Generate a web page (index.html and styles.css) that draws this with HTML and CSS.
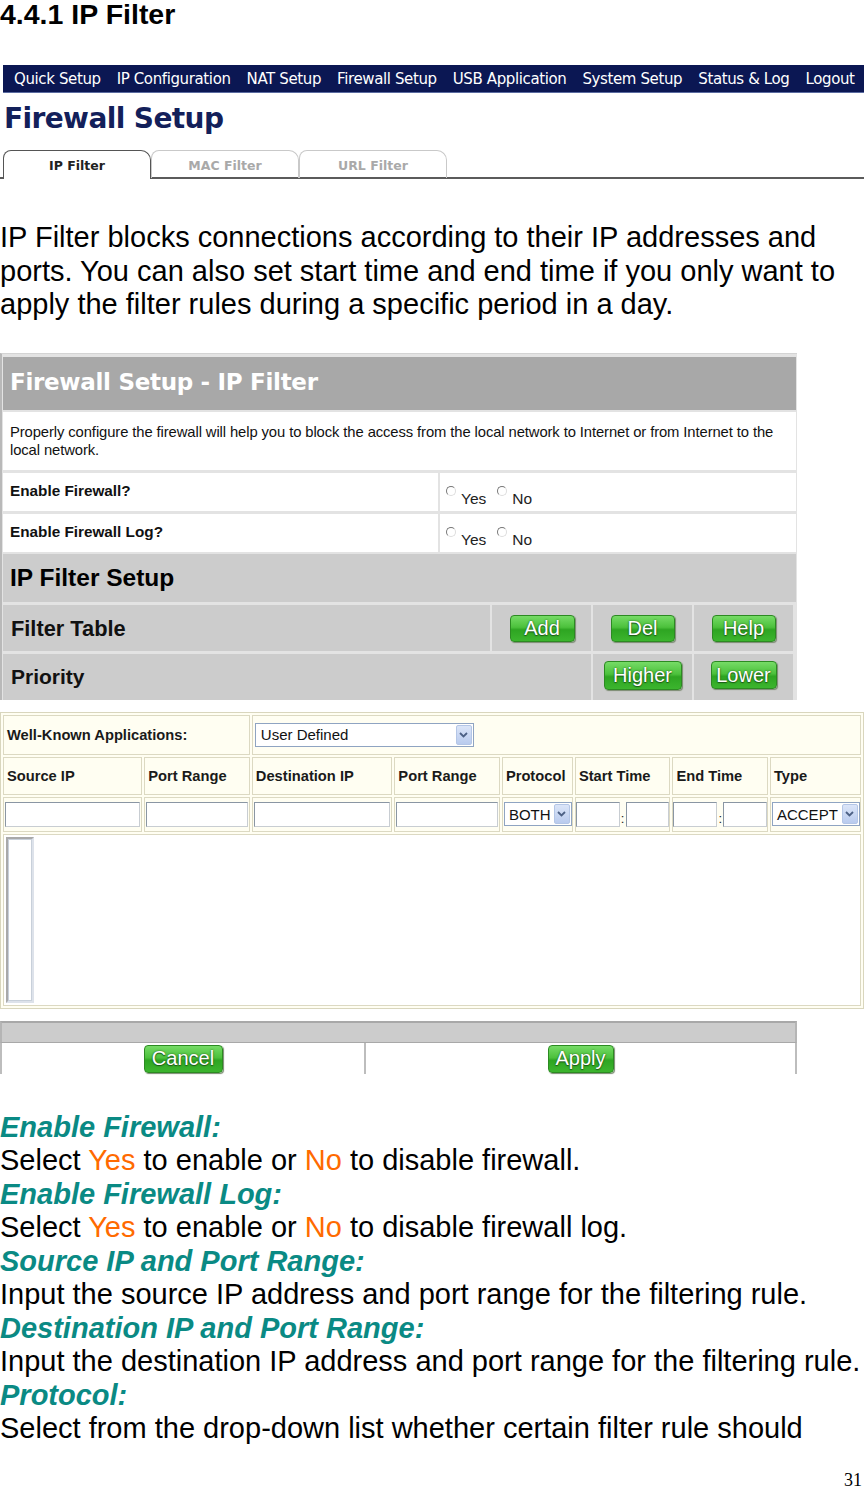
FILE: index.html
```html
<!DOCTYPE html>
<html>
<head>
<meta charset="utf-8">
<link rel="stylesheet" href="styles.css">
</head>
<body>
<h1 class="title">4.4.1 IP Filter</h1>

<div class="shot1">
  <nav class="nav">
    <span>Quick Setup</span><span>IP Configuration</span><span>NAT Setup</span><span>Firewall Setup</span><span>USB Application</span><span>System Setup</span><span>Status &amp; Log</span><span>Logout</span>
  </nav>
  <div class="fw-title">Firewall Setup</div>
  <div class="tabs">
    <div class="tab active">IP Filter</div>
    <div class="tab">MAC Filter</div>
    <div class="tab">URL Filter</div>
  </div>
</div>

<p class="intro">IP Filter blocks connections according to their IP addresses and<br>ports. You can also set start time and end time if you only want to<br>apply the filter rules during a specific period in a day.</p>

<div class="shot2">
  <div class="panel">
    <div class="p-head">Firewall Setup - IP Filter</div>
    <div class="p-desc">Properly configure the firewall will help you to block the access from the local network to Internet or from Internet to the<br>local network.</div>
    <div class="p-row">
      <div class="p-label">Enable Firewall?</div>
      <div class="p-val"><span class="radio"></span><span class="rt">Yes</span><span class="radio"></span><span class="rt">No</span></div>
    </div>
    <div class="p-row">
      <div class="p-label">Enable Firewall Log?</div>
      <div class="p-val"><span class="radio"></span><span class="rt">Yes</span><span class="radio"></span><span class="rt">No</span></div>
    </div>
    <div class="p-sub">IP Filter Setup</div>
    <div class="p-grow">
      <div class="g-label g-wide1">Filter Table</div>
      <div class="g-btn"><span class="gbtn b-add">Add</span></div>
      <div class="g-btn"><span class="gbtn b-del">Del</span></div>
      <div class="g-btn"><span class="gbtn b-help">Help</span></div>
    </div>
    <div class="p-grow">
      <div class="g-label g-wide2">Priority</div>
      <div class="g-btn"><span class="gbtn b-higher">Higher</span></div>
      <div class="g-btn"><span class="gbtn b-lower">Lower</span></div>
    </div>
  </div>

  <table class="rules">
    <tr class="r1">
      <td colspan="2" class="bold">Well-Known Applications:</td>
      <td colspan="6"><span class="sel sel-app"><span class="sel-txt">User Defined</span><span class="sel-arr"><svg width="9" height="6" viewBox="0 0 9 6"><path d="M1 1 L4.5 4.5 L8 1" fill="none" stroke="#4d6185" stroke-width="1.8"/></svg></span></span></td>
    </tr>
    <tr class="r2">
      <td class="c1">Source IP</td>
      <td class="c2">Port Range</td>
      <td class="c3">Destination IP</td>
      <td class="c4">Port Range</td>
      <td class="c5">Protocol</td>
      <td class="c6">Start Time</td>
      <td class="c7">End Time</td>
      <td class="c8">Type</td>
    </tr>
    <tr class="r3">
      <td><span class="inp full"></span></td>
      <td><span class="inp full"></span></td>
      <td><span class="inp full"></span></td>
      <td><span class="inp full"></span></td>
      <td><span class="sel sel-proto"><span class="sel-txt">BOTH</span><span class="sel-arr"><svg width="9" height="6" viewBox="0 0 9 6"><path d="M1 1 L4.5 4.5 L8 1" fill="none" stroke="#4d6185" stroke-width="1.8"/></svg></span></span></td>
      <td><div class="time"><span class="inp t"></span><span class="colon">:</span><span class="inp t"></span></div></td>
      <td><div class="time"><span class="inp t"></span><span class="colon">:</span><span class="inp t"></span></div></td>
      <td><span class="sel sel-type"><span class="sel-txt">ACCEPT</span><span class="sel-arr"><svg width="9" height="6" viewBox="0 0 9 6"><path d="M1 1 L4.5 4.5 L8 1" fill="none" stroke="#4d6185" stroke-width="1.8"/></svg></span></span></td>
    </tr>
    <tr class="r4">
      <td colspan="8"><span class="listbox"></span></td>
    </tr>
  </table>

  <div class="foot">
    <div class="foot-bar"></div>
    <div class="foot-row">
      <div class="foot-cell left"><span class="gbtn b-cancel">Cancel</span></div>
      <div class="foot-cell right"><span class="gbtn b-apply">Apply</span></div>
    </div>
  </div>
</div>

<div class="doc">
  <div class="h">Enable Firewall:</div>
  <div>Select <span class="o">Yes</span> to enable or <span class="o">No</span> to disable firewall.</div>
  <div class="h">Enable Firewall Log:</div>
  <div>Select <span class="o">Yes</span> to enable or <span class="o">No</span> to disable firewall log.</div>
  <div class="h">Source IP and Port Range:</div>
  <div>Input the source IP address and port range for the filtering rule.</div>
  <div class="h">Destination IP and Port Range:</div>
  <div class="nowrap">Input the destination IP address and port range for the filtering rule.</div>
  <div class="h">Protocol:</div>
  <div>Select from the drop-down list whether certain filter rule should</div>
</div>

<div class="pagenum">31</div>
</body>
</html>
```

FILE: styles.css
```css
* { box-sizing: border-box; }
html, body { margin: 0; padding: 0; background: #fff; }
body { width: 864px; height: 1489px; overflow: hidden; font-family: "Liberation Sans", Arial, sans-serif; color: #000; position: relative; }

.title { margin: 0; font-size: 28.5px; line-height: 28px; font-weight: bold; height: 65px; }

/* screenshot 1 */
.shot1 { padding-left: 3px; }
.nav { height: 28px; background: #0b1753; display: flex; align-items: center; padding-left: 11px; gap: 16px; font-family: "DejaVu Sans", Verdana, sans-serif; font-size: 15px; color: #fff; letter-spacing: -0.38px; border-bottom: 1px solid #5a6ba0; }
.fw-title { font-family: "DejaVu Sans", Verdana, sans-serif; font-weight: bold; font-size: 28px; color: #13205a; height: 57px; padding-top: 9px; padding-left: 1px; letter-spacing: -0.6px; }
.tabs { display: flex; height: 29px; border-bottom: 2px solid #5b5b5b; margin-left: -3px; padding-left: 3px; }
.tab { width: 148px; height: 28px; border: 1px solid #c9c9c9; border-bottom: none; border-radius: 8px 10px 0 0; font-family: "DejaVu Sans", Verdana, sans-serif; font-weight: bold; font-size: 12.5px; color: #a9a9a9; text-align: center; padding-top: 7px; }
.tab.active { border-color: #555; color: #222; background: #fff; height: 29px; position: relative; z-index: 1; margin-bottom: -1px; }

.intro { margin: 0; margin-top: 42px; font-size: 29px; line-height: 33.5px; width: 864px; white-space: nowrap; }

/* screenshot 2 */
.shot2 { margin-top: 31px; position: relative; }
.panel { width: 797px; background: #e3e3e3; border-left: 2px solid #b9b9b9; padding: 3px 1px 0 1px; display: flex; flex-direction: column; gap: 2px; border-top: 1px solid #d4d4d4; }
.p-head { height: 53px; background: #a8a8a8; color: #fff; font-family: "DejaVu Sans", Verdana, sans-serif; font-weight: bold; font-size: 23px; padding: 12px 0 0 7px; letter-spacing: -0.3px; }
.p-desc { height: 58px; background: #fff; font-size: 14.8px; line-height: 18px; padding: 11px 0 0 7px; color: #111; letter-spacing: -0.1px; white-space: nowrap; }
.p-row { display: flex; gap: 2px; height: 38px; margin-top: 1px; }
.p-label { width: 435px; background: #fff; font-weight: bold; font-size: 15.3px; padding: 9px 0 0 7px; color: #111; }
.p-val { flex: 1; background: #fff; display: flex; align-items: flex-start; padding: 12px 0 0 6px; font-size: 15.5px; color: #222; }
.radio { width: 10px; height: 10px; border-radius: 50%; border: 1px solid #999; border-color: #777 #ddd #ddd #777; margin-top: 1px; margin-right: 5px; background: #fff; }
.rt { margin-top: 5px; margin-right: 11px; }
.p-sub { height: 48px; background: #cccccc; font-weight: bold; font-size: 24.5px; padding: 10px 0 0 7px; color: #000; }
.p-grow { display: flex; gap: 2px; height: 46px; margin-top: 1px; }
.g-label { background: #cccccc; font-weight: bold; font-size: 21.8px; padding: 11px 0 0 8px; color: #111; }
.g-wide2 { font-size: 21px; }
.g-wide1 { width: 487px; }
.g-wide2 { width: 588px; }
.g-btn { width: 99px; background: #cccccc; display: flex; align-items: center; justify-content: center; }

.gbtn { display: inline-flex; align-items: center; justify-content: center; height: 27px; border-radius: 4px; border: 1px solid #2c8a22; background: linear-gradient(#76db66 0%, #4cc13c 45%, #2ea522 55%, #3cb52e 100%); color: #fff; font-size: 20px; text-shadow: 0 0 2px #1d5a16, 0 1px 1px #1d5a16; box-shadow: 1px 1px 1px #7a8a70; }
.b-add { width: 65px; margin-left: 1px; margin-top: 1px; }
.b-del { width: 64px; margin-top: 1px; }
.b-help { width: 64px; margin-top: 1px; }
.b-higher { width: 78px; margin-top: -2px; height: 29px; }
.b-lower { width: 66px; margin-top: -3px; height: 28px; }
.b-cancel { width: 79px; height: 28px; }
.b-apply { width: 66px; height: 28px; }

.rules { margin-top: 12px; width: 864px; border-collapse: separate; border-spacing: 2px; background: #fffef2; border: 1px solid #d9d6bd; font-size: 14.7px; }
.rules td { border: 1px solid #dcd9c2; padding: 0 0 0 3px; font-weight: bold; color: #1a1a1a; background: #fffef2; }
.r1 td { height: 40px; }
.r2 td { height: 38px; }
.r3 td { height: 35px; padding: 0; }
.r4 td { height: 168px; padding: 2px; background: #fff; vertical-align: top; }
.c1 { width: 140px; } .c2 { width: 106px; } .c3 { width: 141px; } .c4 { width: 106px; }
.c5 { width: 70px; } .c6 { width: 96px; } .c7 { width: 96px; } .c8 { width: 90px; }
.inp { display: block; height: 25px; border: 1px solid #a5acb5; border-color: #8a96a3 #c8cdd2 #c8cdd2 #8a96a3; background: #fff; }
.inp.full { margin: 0 1px; }
.time { display: flex; align-items: flex-end; }
.inp.t { flex: 1; }
.colon { font-weight: normal; width: 6px; text-align: center; font-size: 13px; line-height: 14px; margin-bottom: 1px; }
.sel { display: flex; align-items: center; height: 24px; border: 1px solid #8fa4c2; background: #fff; font-weight: normal; }
.sel-txt { flex: 1; padding-left: 5px; font-size: 15px; color: #111; white-space: nowrap; }
.sel-arr { width: 16px; height: 20px; margin-right: 1px; background: linear-gradient(#dbe5f8, #b9cbee); border: 1px solid #b4c6e6; border-radius: 2px; display: flex; align-items: center; justify-content: center; }
.sel-app { width: 219px; margin-left: -1px; }
.sel-proto { width: 68px; margin-left: 1px; }
.sel-type { width: 88px; margin-left: 1px; }
.sel-type .sel-txt, .sel-proto .sel-txt { padding-left: 4px; }
.listbox { display: block; width: 28px; height: 166px; border: 2px solid #b9b9b9; border-color: #a9a9a9 #dde2ea #dde2ea #a9a9a9; outline: 1px solid #c8d0da; outline-offset: -3px; }

.foot { margin-top: 12px; width: 797px; }
.foot-bar { height: 22px; background: #cccccc; border-top: 2px solid #a8a8a8; border-left: 2px solid #b5b5b5; border-right: 2px solid #b5b5b5; border-bottom: 1px solid #a8a8a8; }
.foot-row { display: flex; height: 31px; background: #fff; border-left: 2px solid #bdbdbd; border-right: 2px solid #bdbdbd; }
.foot-cell { display: flex; align-items: flex-start; justify-content: center; padding-top: 2px; }
.foot-cell.left { width: 364px; border-right: 2px solid #bdbdbd; }
.foot-cell.right { flex: 1; }

.doc { margin-top: 37px; font-size: 29px; line-height: 33.5px; }
.doc .h { color: #0a8a84; font-weight: bold; font-style: italic; }
.doc .o { color: #ff6a00; }
.nowrap { white-space: nowrap; }

.pagenum { position: absolute; right: 2px; top: 1470px; font-family: "Liberation Serif", "Times New Roman", serif; font-size: 18px; }
```
